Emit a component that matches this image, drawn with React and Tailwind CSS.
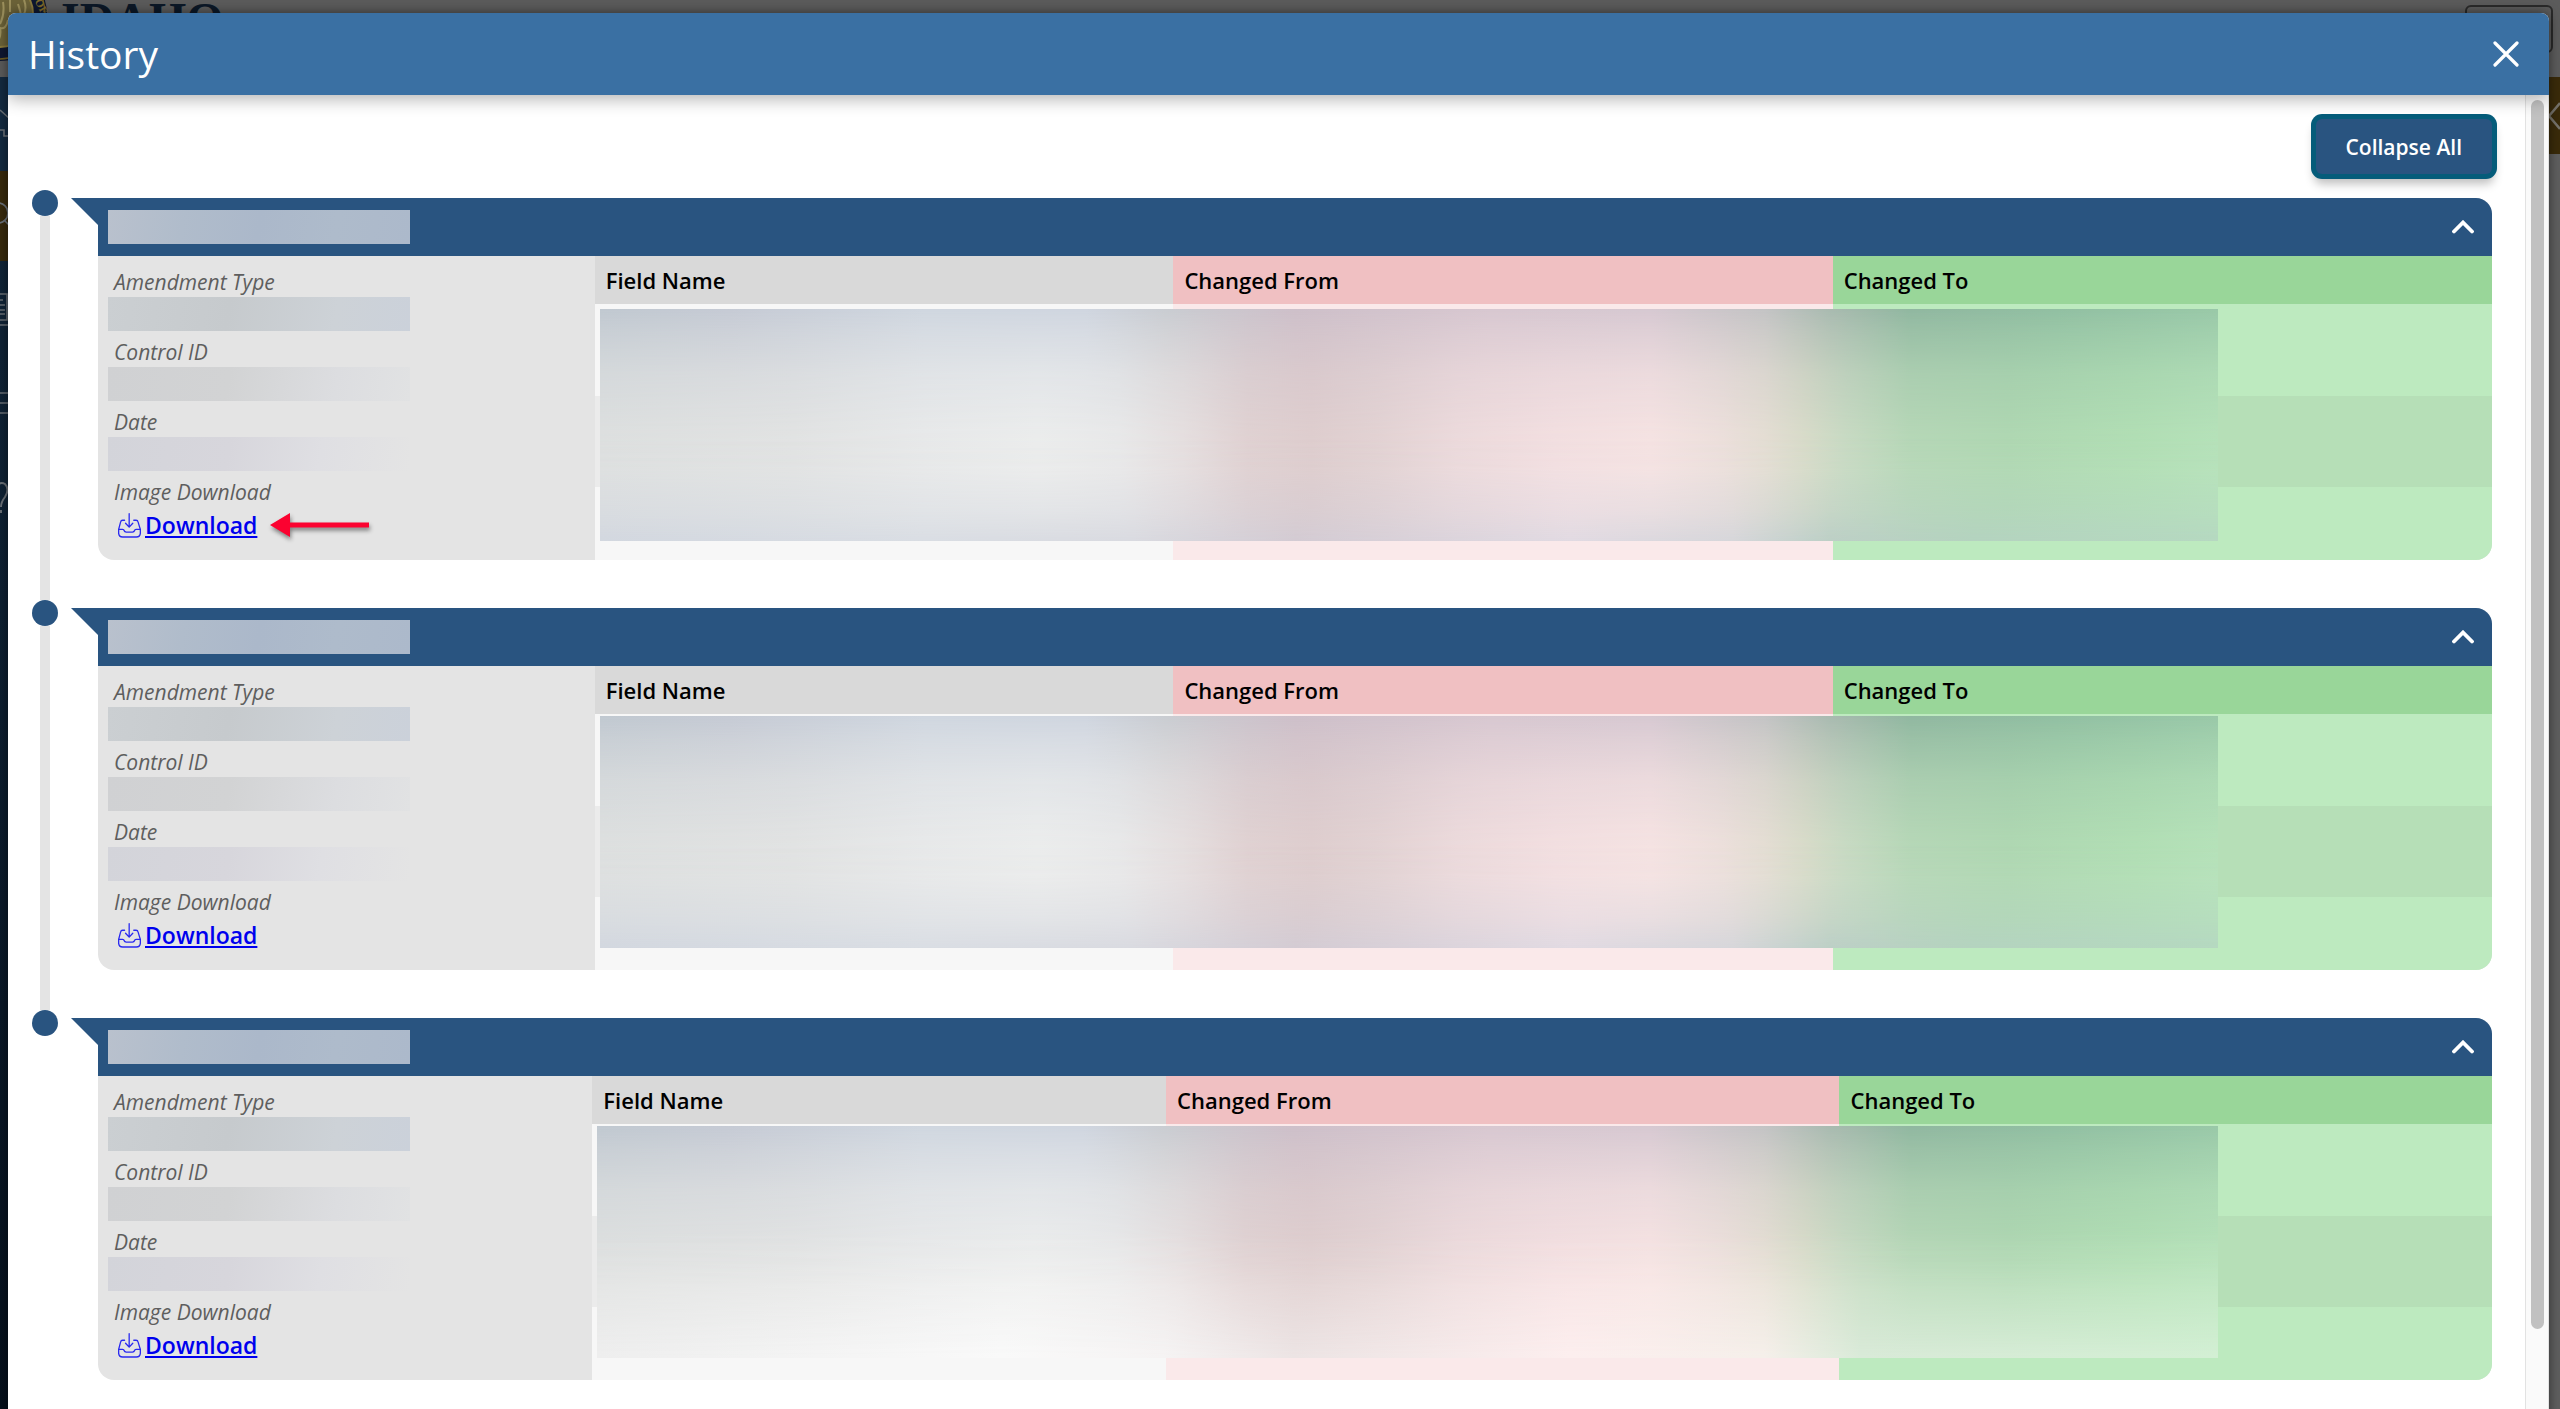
import React, { useState } from "react";

const entries = [
    {
        id: 1,
        panel: "w-[20.75%]",
        cols: ["w-[30.5%]", "w-[34.75%]", "w-[34.75%]"],
        overlayTop: "top-[53px]",
        fadesOut: false,
        highlighted: true,
    },
    {
        id: 2,
        panel: "w-[20.75%]",
        cols: ["w-[30.5%]", "w-[34.75%]", "w-[34.75%]"],
        overlayTop: "top-[50px]",
        fadesOut: false,
        highlighted: false,
    },
    {
        id: 3,
        panel: "w-[20.65%]",
        cols: ["w-[30.2%]", "w-[35.45%]", "w-[34.35%]"],
        overlayTop: "top-[50px]",
        fadesOut: true,
        highlighted: false,
    },
];

const fields = [
    {
        label: "Amendment Type",
        tone: "bg-[linear-gradient(100deg,#cbcfd2_0%,#c6cacd_40%,#cdd2d7_75%,#cbd1da_100%)]",
    },
    {
        label: "Control ID",
        tone: "bg-[linear-gradient(100deg,#d0d1d3_0%,#d2d3d4_40%,#dcdde0_75%,#e1e2e3_100%)]",
    },
    {
        label: "Date",
        tone: "bg-[linear-gradient(100deg,#d3d4da_0%,#d7d6dc_40%,#dfdfe3_70%,#e4e4e4_100%)]",
    },
];

const rowTones = [
    ["bg-[#f7f7f7]", "bg-[#fae9ea]", "bg-[#bdeabf]"],
    ["bg-[#ebebeb]", "bg-[#f0dfe0]", "bg-[#b6dfb7]"],
    ["bg-[#f7f7f7]", "bg-[#fae9ea]", "bg-[#bdeabf]"],
];

const rowHeights = ["h-[92px]", "h-[91px]", "h-[73px]"];

const ChevronUp = () => (
    <svg viewBox="0 0 22 14" className="w-[22px] h-[14px]" fill="none" aria-hidden="true">
        <path
            d="M2 11.5 L11 2.5 L20 11.5"
            stroke="#fff"
            strokeWidth="3.8"
            strokeLinecap="round"
        />
    </svg>
);

const InboxIcon = () => (
    <svg
        viewBox="0 0 70 76"
        className="w-[23px] h-[25px] shrink-0"
        fill="none"
        stroke="#2a2af0"
        strokeWidth="4"
        strokeLinecap="round"
        strokeLinejoin="round"
        aria-hidden="true"
    >
        <path d="M34 2 V42 M23 31 L34 43 L45 31" />
        <path d="M20 22 H14 Q9 22 8 27 L2 50 V62 Q3 73 14 73 H56 Q67 73 68 62 V50 L61 27 Q60 22 55 22 H48" />
        <path d="M2 50 H14 Q18 50 19 54 Q20 58 25 58 H44 Q49 58 50 54 Q51 50 55 50 H68" />
    </svg>
);

const RedArrow = () => (
    <svg
        viewBox="0 0 104 32"
        className="w-[104px] h-[32px] drop-shadow-[1px_3px_2px_rgba(0,0,0,0.45)]"
        aria-hidden="true"
    >
        <path d="M1 16 L21 4 V13.5 H100 V18.5 H21 V28 Z" fill="#fb0230" />
    </svg>
);

// Blurred block that hides the values of the change table
const RedactedTable = ({ top, fadesOut }) => (
    <div
        className={`absolute left-[5px] w-[85.3%] h-[232px] overflow-hidden ${top} bg-[linear-gradient(90deg,#e0e2e1_0%,#e4e5e4_12%,#eaebeb_20%,#eeefee_27%,#ebebeb_32%,#e8e1e1_36%,#e2d3d3_40%,#e0cfcf_44%,#e4d4d4_48%,#eedcdd_53%,#f5e1e2_59%,#f8e5e4_65%,#f0e2de_69%,#e7e0d5_72%,#dbdecb_74.5%,#cbddc5_77%,#b9dab9_81%,#b2dab4_87%,#b4e1b6_95%,#b8e4bb_100%)]`}
        aria-hidden="true"
    >
        <div className="absolute inset-x-0 top-0 h-[70%] bg-[linear-gradient(90deg,#c0c8d0_0%,#c5cad4_8%,#cfd6df_20%,#cfd5df_30%,#c9ccd1_35%,#cdbfc9_43%,#d7c7d0_55%,#d6c8d1_65%,#c3c3c4_72%,#a9bab0_76%,#90b7a0_81%,#91bfa2_90%,#99c8a8_100%)] [mask-image:linear-gradient(180deg,#000_0%,rgba(0,0,0,0.72)_15%,rgba(0,0,0,0.35)_40%,rgba(0,0,0,0.1)_75%,transparent_100%)]"></div>
        {fadesOut ? (
            <div className="absolute inset-x-0 bottom-0 h-[55%] bg-[linear-gradient(90deg,#eeeeee_0%,#f9f9f9_25%,#f5f3f3_35%,#ece4e4_43%,#fceeee_60%,#f5efea_72%,#d9ead8_78%,#d3efd4_100%)] [mask-image:linear-gradient(0deg,#000_0%,rgba(0,0,0,0.6)_35%,rgba(0,0,0,0.15)_75%,transparent_100%)]"></div>
        ) : (
            <div className="absolute inset-x-0 bottom-0 h-[45%] bg-[linear-gradient(90deg,#d2d7df_0%,#d9dde3_20%,#d9dae0_33%,#d3cbd3_43%,#e1dae2_60%,#d6d6da_70%,#bccfc6_76%,#b4d3bf_85%,#b5d8c1_100%)] [mask-image:linear-gradient(0deg,#000_0%,rgba(0,0,0,0.5)_30%,rgba(0,0,0,0.12)_70%,transparent_100%)]"></div>
        )}
    </div>
);

const ChangeTable = ({ entry }) => (
    <div className="relative flex-1">
        <table className="w-full table-fixed border-collapse text-left">
            <thead>
                <tr className="h-12 text-[22px] leading-[30px] text-black">
                    <th className={`${entry.cols[0]} bg-[#d9d9d9] px-[11px] py-0 font-semibold`}>
                        Field Name
                    </th>
                    <th className={`${entry.cols[1]} bg-[#f0c0c2] px-[11px] py-0 font-semibold`}>
                        Changed From
                    </th>
                    <th className={`${entry.cols[2]} bg-[#99d699] px-[11px] py-0 font-semibold`}>
                        Changed To
                    </th>
                </tr>
            </thead>
            <tbody>
                {rowTones.map((tones, index) => (
                    <tr key={index} className={rowHeights[index]}>
                        {tones.map((tone, col) => (
                            <td key={col} className={tone}></td>
                        ))}
                    </tr>
                ))}
            </tbody>
        </table>
        <RedactedTable top={entry.overlayTop} fadesOut={entry.fadesOut} />
    </div>
);

const HistoryEntry = ({ entry, isLast, open, onToggle }) => (
    <li className="flex">
        {/* Timeline dot and line */}
        <div className="flex w-[26px] shrink-0 flex-col items-center">
            <div className="size-[26px] rounded-full bg-[#295480]"></div>
            {!isLast && <div className="w-[10px] flex-1 bg-[#e4e4e4]"></div>}
        </div>

        <svg
            viewBox="0 0 27 27"
            className="mt-2 ml-[13px] size-[27px] shrink-0"
            aria-hidden="true"
        >
            <path d="M0 0 H27 V27 Z" fill="#295480" />
        </svg>

        <section className="mt-2 mb-10 min-w-0 flex-1 overflow-hidden rounded-r-2xl rounded-bl-2xl bg-[#e4e4e4]">
            <header className="flex h-[58px] items-center justify-between bg-[#295480] pr-[18px] pl-[10px]">
                <div
                    className="h-[34px] w-[302px] bg-[linear-gradient(100deg,#b9c1cd_0%,#b0bccb_25%,#abb8ca_50%,#aebbcb_75%,#acb9cb_100%)]"
                    aria-hidden="true"
                ></div>
                <button
                    type="button"
                    aria-label="Toggle entry"
                    aria-expanded={open}
                    onClick={onToggle}
                    className={open ? "" : "rotate-180"}
                >
                    <ChevronUp />
                </button>
            </header>

            {open && (
                <div className="flex">
                    <div className={`${entry.panel} shrink-0 pt-[11px] pl-[10px]`}>
                        {fields.map((field) => (
                            <div key={field.label} className="mb-[6px]">
                                <p className="pl-[6px] text-[21px] leading-[30px] text-[#5e5e5e] italic">
                                    {field.label}
                                </p>
                                <div
                                    className={`h-[34px] w-[302px] ${field.tone}`}
                                    aria-hidden="true"
                                ></div>
                            </div>
                        ))}
                        <p className="pl-[6px] text-[21px] leading-[30px] text-[#5e5e5e] italic">
                            Image Download
                        </p>
                        <div className="flex items-center pl-[10px]">
                            <InboxIcon />
                            <a
                                href="#download"
                                className="ml-1 text-[23px] leading-9 font-semibold text-[#0000ee] underline"
                            >
                                Download
                            </a>
                            {entry.highlighted && (
                                <div className="ml-3">
                                    <RedArrow />
                                </div>
                            )}
                        </div>
                    </div>
                    <ChangeTable entry={entry} />
                </div>
            )}
        </section>
    </li>
);

// Dimmed page that stays visible around the dialog
const PageBehind = () => (
    <div className="absolute inset-0 flex flex-col bg-[#5f5f5f]" aria-hidden="true">
        <div className="flex h-[77px] items-start justify-between bg-[#5b5b5b] pr-[7px]">
            <svg viewBox="0 0 240 77" className="h-[77px] w-[240px]">
                <circle cx="0" cy="14" r="47" fill="#0f1730" />
                <circle cx="0" cy="14" r="45" fill="none" stroke="#6e5c22" strokeWidth="1.5" />
                <circle cx="0" cy="14" r="33" fill="#6b6238" stroke="#8a7a3c" strokeWidth="2" />
                <path
                    d="M-4 44 Q2 36 0 28 Q6 30 8 20 M0 24 Q5 14 3 2 M12 40 Q10 26 16 16 M18 30 Q24 20 18 4 M10 12 V0 M24 14 Q27 8 24 0"
                    fill="none"
                    stroke="#9b8f5c"
                    strokeWidth="2"
                />
                <text
                    x="33"
                    y="4"
                    transform="rotate(62 36 4)"
                    className="fill-[#7d6a2c] font-['Liberation_Serif',serif] text-[11px] font-bold"
                >
                    OF
                </text>
                <text
                    x="61"
                    y="36"
                    className="fill-[#0c1827] font-['Liberation_Serif',serif] text-[48px] font-bold"
                >
                    IDAHO
                </text>
            </svg>
            <div className="mt-[5px] h-12 w-[88px] rounded-md border-2 border-[#2a2a2a]"></div>
        </div>
        <div className="flex flex-1">
            <div className="flex w-16 flex-col bg-[linear-gradient(180deg,#12263a_0%,#0e2032_40%,#06101c_100%)]">
                <svg
                    viewBox="0 0 64 454"
                    className="h-[454px] w-16"
                    fill="none"
                    stroke="#6a7077"
                    strokeWidth="1.6"
                >
                    <path d="M0 0 H64 V94 H0 Z" fill="#142a40" stroke="none" />
                    <path d="M0 94 H64 V184 H0 Z" fill="#37290c" stroke="none" />
                    <path d="M0 33 L10 42 M0 53 H4 V59 H10" />
                    <circle cx="-2" cy="136" r="10" />
                    <path d="M4 143 L12 151" />
                    <path d="M0 217 H7 V243 H0 M0 223 H3 M0 228 H5 M0 233 H5 M0 237 H5 M0 248 H10" />
                    <path d="M0 316 H10 M0 326 H10 M0 336 H10" />
                    <path d="M-4 410 Q0 404 5 407 Q10 412 5 420 Q1 425 1 430 M1 433 V436" strokeWidth="2" />
                </svg>
            </div>
            <div className="flex-1">
                <div className="flex h-[77px] items-center justify-end bg-[#3a2b0a]">
                    <svg viewBox="0 0 12 28" className="h-7 w-3" fill="none">
                        <path d="M12 1 L1 14 L12 27" stroke="#77736b" strokeWidth="2.5" />
                    </svg>
                </div>
            </div>
        </div>
    </div>
);

const App = () => {
    const [closed, setClosed] = useState([]);

    const toggle = (id) => {
        setClosed((prev) =>
            prev.includes(id) ? prev.filter((item) => item !== id) : [...prev, id],
        );
    };

    const toggleAll = () => {
        setClosed(closed.length === 0 ? entries.map((entry) => entry.id) : []);
    };

    return (
        <div className="relative h-screen overflow-hidden font-['Open_Sans','Noto_Sans',sans-serif]">
            <PageBehind />

            <div
                role="dialog"
                aria-labelledby="history-title"
                className="relative mt-[13px] mr-[11px] ml-2 flex h-full flex-col overflow-hidden rounded-t-lg bg-white shadow-[0_0_12px_rgba(0,0,0,0.5)]"
            >
                <header className="relative z-10 flex h-[82px] shrink-0 items-center justify-between bg-[#3a70a3] pr-[30px] pl-5 shadow-[0_4px_16px_rgba(0,0,0,0.3)]">
                    <h1 id="history-title" className="text-[39px] leading-[52px] text-white">
                        History
                    </h1>
                    <button type="button" aria-label="Close">
                        <svg viewBox="0 0 26 26" className="size-[26px]" fill="none">
                            <path
                                d="M2 2 L24 24 M24 2 L2 24"
                                stroke="#fff"
                                strokeWidth="3.2"
                                strokeLinecap="round"
                            />
                        </svg>
                    </button>
                </header>

                <div className="flex min-h-0 flex-1">
                    <main className="min-w-0 flex-1 pt-6 pr-[33px] pl-6">
                        <div className="mb-4 flex justify-end">
                            <button
                                type="button"
                                onClick={toggleAll}
                                className="h-[55px] rounded-md bg-[#295480] px-[30px] text-[21px] leading-[30px] font-semibold text-white shadow-[0_0_0_5px_#055c7a,0_8px_10px_2px_rgba(0,0,0,0.25)]"
                            >
                                {closed.length === 0 ? "Collapse All" : "Expand All"}
                            </button>
                        </div>

                        <ul>
                            {entries.map((entry, index) => (
                                <HistoryEntry
                                    key={entry.id}
                                    entry={entry}
                                    isLast={index === entries.length - 1}
                                    open={!closed.includes(entry.id)}
                                    onToggle={() => toggle(entry.id)}
                                />
                            ))}
                        </ul>
                    </main>

                    {/* Scroll track */}
                    <div
                        className="flex w-6 shrink-0 justify-center border-x border-[#e2e2e2] bg-[#fafafa] pt-[5px]"
                        aria-hidden="true"
                    >
                        <div className="h-[93%] w-[13px] rounded-full bg-[#c1c1c1]"></div>
                    </div>
                </div>
            </div>
        </div>
    );
};

export default App;
